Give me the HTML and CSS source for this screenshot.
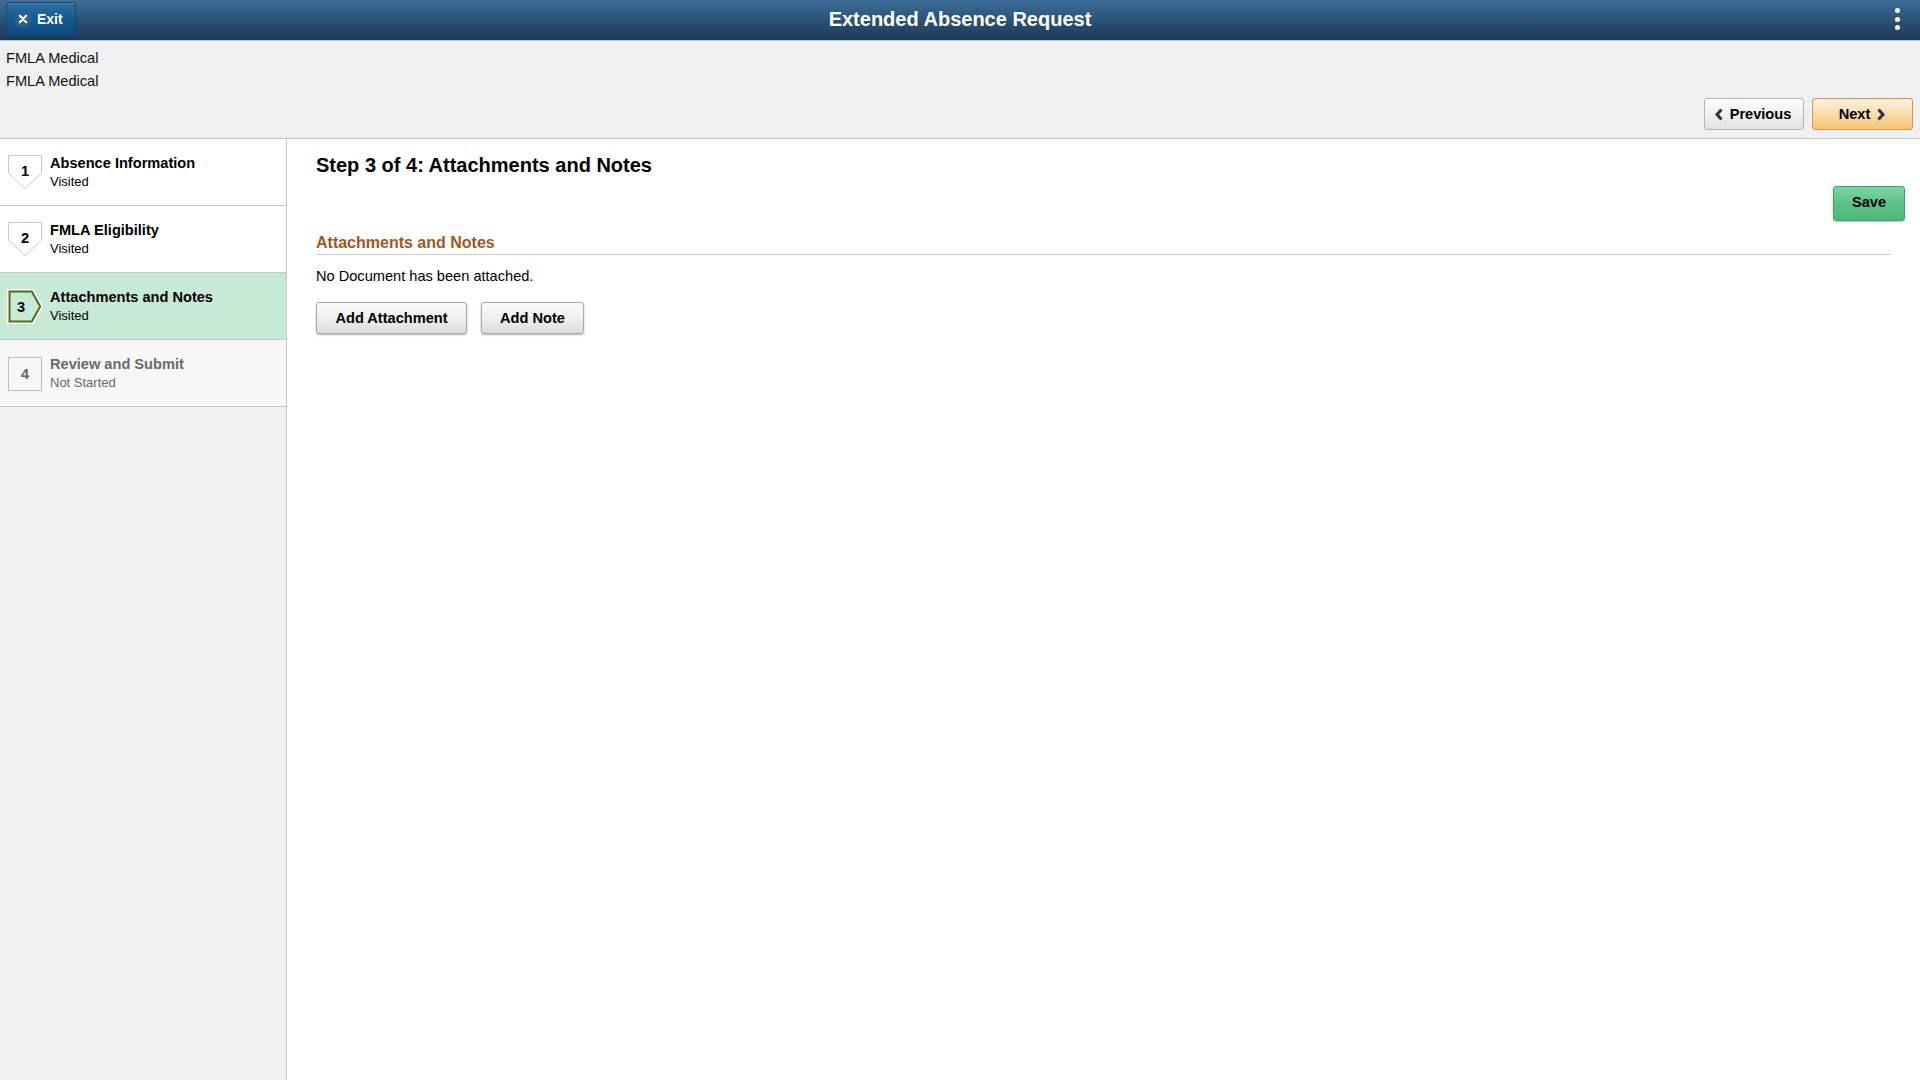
FILE: index.html
```html
<!DOCTYPE html>
<html lang="en">
<head>
<meta charset="utf-8">
<title>Extended Absence Request</title>
<link rel="stylesheet" href="styles.css">
</head>
<body>
<header class="header">
  <button class="exit-btn">
    <svg class="exit-icon" width="18" height="18" viewBox="0 0 18 18"><circle cx="9" cy="9" r="8.5" fill="#2f5f86"/><path d="M5.8 5.8 L12.2 12.2 M12.2 5.8 L5.8 12.2" stroke="#fff" stroke-width="2.2" stroke-linecap="round"/></svg>
    <span>Exit</span>
  </button>
  <div class="header-title">Extended Absence Request</div>
  <div class="kebab"><span></span><span></span><span></span></div>
</header>
<section class="subheader">
  <div class="info">
    <div>FMLA Medical</div>
    <div>FMLA Medical</div>
  </div>
  <div class="nav">
    <button class="btn btn-prev">
      <svg width="10" height="13" viewBox="0 0 10 13"><path d="M7.5 1.5 L3 6.5 L7.5 11.5" fill="none" stroke="#333" stroke-width="3"/></svg>
      <span>Previous</span>
    </button>
    <button class="btn btn-next">
      <span>Next</span>
      <svg width="10" height="13" viewBox="0 0 10 13"><path d="M2.5 1.5 L7 6.5 L2.5 11.5" fill="none" stroke="#333" stroke-width="3"/></svg>
    </button>
  </div>
</section>
<div class="layout">
  <nav class="sidebar">
    <div class="step">
      <div class="step-icon icon-down">
        <svg width="35" height="35" viewBox="0 0 35 35"><polygon points="0.5,0.5 33.5,0.5 33.5,18 17,33.5 0.5,18" fill="#fff" stroke="#c8c8c8"/></svg>
        <span class="num num-down">1</span>
      </div>
      <div class="step-text"><div class="step-title">Absence Information</div><div class="step-status">Visited</div></div>
    </div>
    <div class="step">
      <div class="step-icon icon-down">
        <svg width="35" height="35" viewBox="0 0 35 35"><polygon points="0.5,0.5 33.5,0.5 33.5,18 17,33.5 0.5,18" fill="#fff" stroke="#c8c8c8"/></svg>
        <span class="num num-down">2</span>
      </div>
      <div class="step-text"><div class="step-title">FMLA Eligibility</div><div class="step-status">Visited</div></div>
    </div>
    <div class="step step-active">
      <div class="step-icon icon-active">
        <svg width="38" height="36" viewBox="0 0 38 36"><polygon points="1.5,1.5 25.5,1.5 34.5,17.5 25.5,33.5 1.5,33.5" fill="#c8e9d6" stroke="#fff" stroke-width="3"/><polygon points="2.5,2.5 24.8,2.5 33.2,17.5 24.8,32.5 2.5,32.5" fill="#c8e9d6" stroke="#4f6f12" stroke-width="2"/></svg>
        <span class="num num-right">3</span>
      </div>
      <div class="step-text"><div class="step-title">Attachments and Notes</div><div class="step-status">Visited</div></div>
    </div>
    <div class="step step-pending">
      <div class="step-icon icon-pending">
        <span class="num num-box">4</span>
      </div>
      <div class="step-text"><div class="step-title">Review and Submit</div><div class="step-status">Not Started</div></div>
    </div>
  </nav>
  <main class="main">
    <h1 class="page-title">Step 3 of 4: Attachments and Notes</h1>
    <div class="actions"><button class="btn btn-save">Save</button></div>
    <h2 class="section-title">Attachments and Notes</h2>
    <p class="empty">No Document has been attached.</p>
    <div class="buttons">
      <button class="btn btn-gray btn-attach">Add Attachment</button>
      <button class="btn btn-gray btn-note">Add Note</button>
    </div>
  </main>
</div>
</body>
</html>
```
FILE: styles.css
```css
* { box-sizing: border-box; }
html, body { margin: 0; padding: 0; height: 100%; }
body {
  font-family: "Liberation Sans", Arial, sans-serif;
  font-size: 14.6px;
  color: #000;
  background: #fff;
  display: flex;
  flex-direction: column;
  min-height: 1080px;
}
button { font-family: inherit; cursor: pointer; }

.header {
  position: relative;
  height: 41px;
  background: linear-gradient(to bottom, #3c6e97 0%, #2b5378 50%, #1c3756 100%);
  border-bottom: 1px solid #a9cbe6;
  display: flex;
  align-items: flex-start;
  flex-shrink: 0;
}
.exit-btn {
  margin: 2px 0 0 6px;
  width: 70px;
  height: 34px;
  border: 1px solid #1d4466;
  border-radius: 3px;
  background: linear-gradient(to bottom, #2b6fa3 0%, #125a92 50%, #0a4c82 100%);
  color: #fff;
  font-weight: bold;
  font-size: 14px;
  display: flex;
  align-items: center;
  padding: 0 0 0 7px;
  gap: 5px;
  box-shadow: inset 0 1px 0 rgba(255,255,255,0.15);
}
.exit-icon { display: block; }
.header-title {
  position: absolute;
  left: 0; right: 0; top: 0;
  text-align: center;
  color: #fff;
  font-weight: bold;
  font-size: 20px;
  line-height: 38px;
  pointer-events: none;
}
.kebab {
  margin-left: auto;
  margin-right: 20px;
  margin-top: 8px;
  display: flex;
  flex-direction: column;
  gap: 3.5px;
}
.kebab span {
  width: 5px; height: 5px; border-radius: 50%; background: #fff; display: block;
}

.subheader {
  height: 98px;
  background: #f0f0f0;
  border-bottom: 1px solid #c6c6c6;
  padding: 6px 7px 8px 6px;
  display: flex;
  flex-direction: column;
  flex-shrink: 0;
}
.info { line-height: 23px; color: #111; }
.nav {
  margin-top: auto;
  display: flex;
  justify-content: flex-end;
  gap: 8px;
}
.btn {
  height: 32px;
  border-radius: 3px;
  font-weight: bold;
  font-size: 14.6px;
  color: #000;
  display: inline-flex;
  align-items: center;
  justify-content: center;
  padding: 0;
}
.btn-prev {
  width: 100px;
  border: 1px solid #b5b5b5;
  background: linear-gradient(to bottom, #fdfdfd 0%, #f1f1f1 50%, #e2e2e2 100%);
  gap: 6px;
  padding-right: 3px;
}
.btn-next {
  width: 101px;
  border: 1px solid #d9953a;
  background: linear-gradient(to bottom, #fdf2e2 0%, #f9dcab 50%, #f5c574 100%);
  gap: 6px;
}

.layout { flex: 1; display: flex; }
.sidebar {
  width: 287px;
  flex-shrink: 0;
  background: #f0f0f0;
  border-right: 1px solid #c6c6c6;
}
.step {
  height: 67px;
  border-bottom: 1px solid #c6c6c6;
  background: #fff;
  display: flex;
  align-items: flex-start;
  position: relative;
}
.step-active { background: #c8e9d6; }
.step-pending { background: #f7f7f7; }
.step-icon {
  position: relative;
  margin: 16px 0 0 8px;
}
.step-icon svg { display: block; }
.icon-down { width: 35px; height: 35px; }
.icon-active { margin: 16px 0 0 7px; width: 38px; height: 36px; }
.icon-pending {
  margin: 17px 0 0 8px;
  width: 34px; height: 34px;
  border: 1px solid #bdbdbd;
  background: #f7f7f7;
}
.num {
  position: absolute;
  font-weight: bold;
  font-size: 14.6px;
  line-height: 16px;
  text-align: center;
}
.num-down { left: 0; width: 34px; top: 8px; }
.num-right { left: 1px; width: 26px; top: 10px; color: #000; }
.num-box { left: 0; right: 0; top: 8px; color: #666; font-size: 15px; }
.step-text { position: absolute; left: 50px; top: 16px; }
.step-title { font-weight: bold; font-size: 14.6px; line-height: 17px; }
.step-status { font-size: 13px; line-height: 17px; margin-top: 1px; }
.step-pending .step-title, .step-pending .step-status { color: #6a6a6a; }

.main {
  flex: 1;
  padding: 14px 15px 0 29px;
}
.page-title {
  margin: 0;
  font-size: 20px;
  line-height: 24px;
  font-weight: bold;
}
.actions { display: flex; justify-content: flex-end; margin-top: 9px; }
.btn-save {
  width: 72px;
  height: 35px;
  border: 1px solid #3ca266;
  background: linear-gradient(to bottom, #7ed6a0 0%, #5cc388 50%, #4db67a 100%);
  box-shadow: 0 1px 2px rgba(0,0,0,0.25);
  padding-bottom: 3px;
}
.section-title {
  margin: 12px 14px 0 0;
  font-size: 16px;
  line-height: 20px;
  font-weight: bold;
  color: #a1561e;
  padding-bottom: 1px;
  border-bottom: 1px solid #cfcfcf;
}
.empty { margin: 12px 0 0; line-height: 18px; }
.buttons { display: flex; gap: 14px; margin-top: 17px; }
.btn-gray {
  height: 32px;
  border: 1px solid #a9a9a9;
  background: linear-gradient(to bottom, #fbfbfb 0%, #efefef 50%, #dcdcdc 100%);
  box-shadow: 0 1px 2px rgba(0,0,0,0.3);
}
.btn-attach { width: 151px; }
.btn-note { width: 103px; }
```
